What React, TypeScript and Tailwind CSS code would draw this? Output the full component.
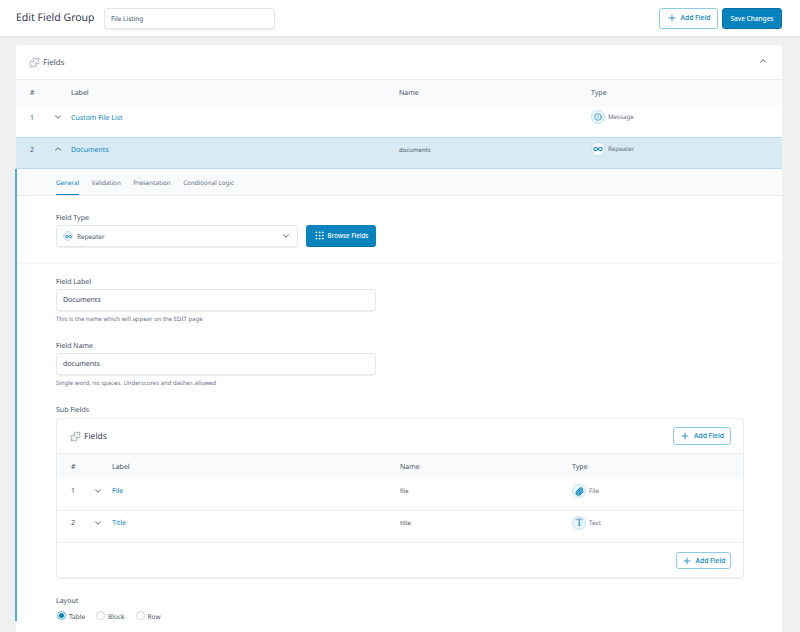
import React from "react";
import { ChevronDown, ChevronUp, Plus, Puzzle, Grip, Infinity as Inf, Paperclip, Info } from "lucide-react";

const Badge = ({ children, bg = "bg-[#ebf5fa]" }: { children: React.ReactNode; bg?: string }) => (
  <span className={`flex h-[14px] w-[14px] shrink-0 items-center justify-center rounded-full border border-[#c5e3f2] text-[#0783be] ${bg}`}>
    {children}
  </span>
);

const TypeCell = ({ icon, label }: { icon: React.ReactNode; label: string }) => (
  <div className="flex items-center gap-[3px] text-[6.2px] text-[#667085]">
    {icon}
    <span>{label}</span>
  </div>
);

const AddButton = ({ className = "" }: { className?: string }) => (
  <button className={`flex items-center justify-center rounded-[3px] border border-[#8ccbe8] bg-white text-[#0783be] ${className}`}>
    <Plus className="h-[10px] w-[10px] stroke-[2]" />
    <span className="ml-[4px] pt-px text-[6.75px] font-medium">Add Field</span>
  </button>
);

const FieldLabel = ({ children }: { children: React.ReactNode }) => (
  <div className="text-[7px] leading-[10px] text-[#475467]">{children}</div>
);

const TextBox = ({ value }: { value: string }) => (
  <div className="flex h-[22px] w-[320px] items-center rounded-[3px] border border-[#e5e7eb] bg-white px-[6px] pt-[3px] text-[7px] text-[#344054] shadow-[0_1px_1px_rgba(16,24,40,0.08)]">
    {value}
  </div>
);

const Radio = ({ label, on }: { label: string; on?: boolean }) => (
  <div className="flex items-center gap-[3px] text-[6.5px] text-[#475467]">
    {on ? (
      <span className="flex h-[9px] w-[9px] items-center justify-center rounded-full border border-[#4db0e0] bg-white">
        <span className="h-[5px] w-[5px] rounded-full bg-[#0783be]" />
      </span>
    ) : (
      <span className="h-[9px] w-[9px] rounded-full border border-[#d0d5dd] bg-white" />
    )}
    <span className="pt-px">{label}</span>
  </div>
);

export default function App() {
  return (
    <div className="h-[632px] w-[800px] overflow-hidden bg-[#f0f0f1] font-['Noto_Sans','Open_Sans',sans-serif] [text-rendering:geometricPrecision]">
      <header className="flex h-[36px] items-center bg-white pl-[16px] pr-[18px] shadow-[0_1px_2px_rgba(16,24,40,0.1)]">
        <h1 className="w-[88px] pt-[2px] text-[10.5px] text-[#344054]">Edit Field Group</h1>
        <div className="flex h-[21px] w-[171px] items-center rounded-[3px] border border-[#e5e7eb] bg-white px-[6px] pt-[2px] text-[6.5px] text-[#475467] shadow-[0_1px_1px_rgba(16,24,40,0.08)]">
          File Listing
        </div>
        <AddButton className="ml-auto h-[21px] w-[59px]" />
        <button className="ml-[4px] h-[21px] w-[60px] rounded-[3px] border border-[#0a6ea3] bg-[#0783be] pt-px text-[6.5px] font-medium text-white">
          Save Changes
        </button>
      </header>

      <main className="ml-[16px] mt-[9px] h-[600px] w-[766px] rounded-t-[4px] bg-white">
        <div className="flex h-[34px] items-center pl-[13px] pr-[14px] text-[#475467]">
          <Puzzle className="h-[11px] w-[11px] stroke-[1]" />
          <span className="ml-[3px] pt-[2px] text-[8px]">Fields</span>
          <ChevronUp className="mb-[2px] ml-auto h-[10px] w-[10px] stroke-2 text-[#344054]" />
        </div>

        <div className="flex h-[27px] items-center border-t border-[#eaecf0] bg-[#f9fafb] pl-[14px] pt-[2px] text-[7px] text-[#475467]">
          <span className="w-[41px]">#</span>
          <span className="w-[328px]">Label</span>
          <span className="w-[192px]">Name</span>
          <span>Type</span>
        </div>

        <div className="flex h-[31px] items-start bg-white pl-[14px] pt-[4px] text-[7px] text-[#475467]">
          <span className="mt-[4px] w-[22.5px]">1</span>
          <ChevronDown className="mt-[1.5px] h-[10px] w-[10px] stroke-2 text-[#344054]" />
          <span className="ml-[8.5px] mt-[4px] w-[328px] text-[7px] text-[#0783be]">Custom File List</span>
          <span className="w-[192px]" />
          <TypeCell label="Message" icon={<Badge><Info className="h-[8px] w-[8px]" /></Badge>} />
        </div>

        <div className="flex h-[32px] items-start border-y border-[#b9dcec] bg-[#d8ebf5] pl-[14px] pt-[4px] text-[7px] text-[#475467]">
          <span className="mt-[4px] w-[22.5px]">2</span>
          <ChevronUp className="mt-[1.5px] h-[10px] w-[10px] stroke-2 text-[#344054]" />
          <span className="ml-[8.5px] mt-[4px] w-[328px] text-[7px] text-[#0783be]">Documents</span>
          <span className="mt-[4px] w-[192px] text-[6px]">documents</span>
          <TypeCell label="Repeater" icon={<Badge bg="bg-white"><Inf className="h-[10px] w-[10px] stroke-[2.5]" /></Badge>} />
        </div>

        <div className="-ml-px border-l-2 border-[#4db0e0]">
          <nav className="flex h-[27px] gap-[12.5px] border-b border-[#eaecf0] bg-[#f9fafb] pl-[39px] text-[6.25px] text-[#667085]">
            <span className="flex h-[26px] items-center border-b border-[#0783be] pt-[2px] text-[#0783be]">General</span>
            <span className="flex items-center pt-[2px]">Validation</span>
            <span className="flex items-center pt-[2px]">Presentation</span>
            <span className="flex items-center pt-[2px]">Conditional Logic</span>
          </nav>

          <section className="h-[68px] border-b border-[#f2f4f7] pl-[39px] pt-[18px]">
            <FieldLabel>Field Type</FieldLabel>
            <div className="mt-px flex items-center gap-[8px]">
              <div className="flex h-[22px] w-[242px] items-center rounded-[3px] border border-[#e5e7eb] bg-white pl-[6px] pr-[3px] text-[6.5px] text-[#475467] shadow-[0_1px_1px_rgba(16,24,40,0.08)]">
                <span className="flex h-[10px] w-[10px] items-center justify-center rounded-full border border-[#c5e3f2] bg-[#ebf5fa] text-[#0783be]">
                  <Inf className="h-[7px] w-[7px] stroke-[3]" />
                </span>
                <span className="ml-[4px] pt-[2px]">Repeater</span>
                <ChevronDown className="ml-auto mr-[3px] h-[10px] w-[10px] stroke-2 text-[#344054]" />
              </div>
              <button className="flex h-[22px] w-[70px] items-center justify-center rounded-[3px] border-b border-[#0a6ea3] bg-[#0783be] text-[6.25px] font-medium text-white">
                <Grip className="mr-[3px] h-[11px] w-[11px]" />
                <span className="pt-px">Browse Fields</span>
              </button>
            </div>
          </section>

          <section className="pl-[39px] pt-[14px]">
            <FieldLabel>Field Label</FieldLabel>
            <div className="mt-px"><TextBox value="Documents" /></div>
            <div className="mt-[4px] text-[6px] leading-[9px] text-[#667085]">This is the name which will appear on the EDIT page</div>
            <div className="mt-[18px]"><FieldLabel>Field Name</FieldLabel></div>
            <div className="mt-px"><TextBox value="documents" /></div>
            <div className="mt-[4px] text-[6px] leading-[9px] text-[#667085]">Single word, no spaces. Underscores and dashes allowed</div>

            <div className="mt-[18px]"><FieldLabel>Sub Fields</FieldLabel></div>
            <div className="mt-[2px] h-[160px] w-[688px] overflow-hidden rounded-[4px] border border-[#eaecf0] shadow-[0_1px_1px_rgba(16,24,40,0.08)]">
              <div className="flex h-[34px] items-center pl-[13px] pr-[12px] text-[#344054]">
                <Puzzle className="h-[11px] w-[11px] stroke-[1]" />
                <span className="ml-[3px] pt-[3px] text-[8.5px]">Fields</span>
                <AddButton className="ml-auto h-[18px] w-[58px]" />
              </div>
              <div className="flex h-[26px] items-center border-t border-[#eaecf0] bg-[#f9fafb] pl-[14px] pt-[4px] text-[7px] text-[#475467]">
                <span className="w-[41px]">#</span>
                <span className="w-[288px]">Label</span>
                <span className="w-[172px]">Name</span>
                <span>Type</span>
              </div>
              {[
                { n: "1", label: "File", name: "file", type: "File", icon: <Paperclip className="h-[9px] w-[9px] stroke-[3]" /> },
                { n: "2", label: "Title", name: "title", type: "Text", icon: <span className="font-['Liberation_Serif',serif] text-[11px] leading-none">T</span> },
              ].map((r) => (
                <div key={r.n} className="flex h-[32px] items-start border-b border-[#eaecf0] pl-[14px] pt-[5px] text-[7px] text-[#475467]">
                  <span className="mt-[3px] w-[22px]">{r.n}</span>
                  <ChevronDown className="mt-[1.5px] h-[10px] w-[10px] stroke-2 text-[#344054]" />
                  <span className="ml-[9px] mt-[3px] w-[288px] text-[7px] text-[#0783be]">{r.label}</span>
                  <span className="mt-[3px] w-[172px] text-[6px]">{r.name}</span>
                  <TypeCell label={r.type} icon={<Badge>{r.icon}</Badge>} />
                </div>
              ))}
              <div className="flex justify-end pr-[12px] pt-[9px]">
                <AddButton className="h-[17px] w-[55px]" />
              </div>
            </div>

            <div className="mt-[19px]"><FieldLabel>Layout</FieldLabel></div>
            <div className="mt-[3.5px] flex gap-[11px] pl-px">
              <Radio on label="Table" />
              <Radio label="Block" />
              <Radio label="Row" />
            </div>
          </section>
        </div>
      </main>
    </div>
  );
}
